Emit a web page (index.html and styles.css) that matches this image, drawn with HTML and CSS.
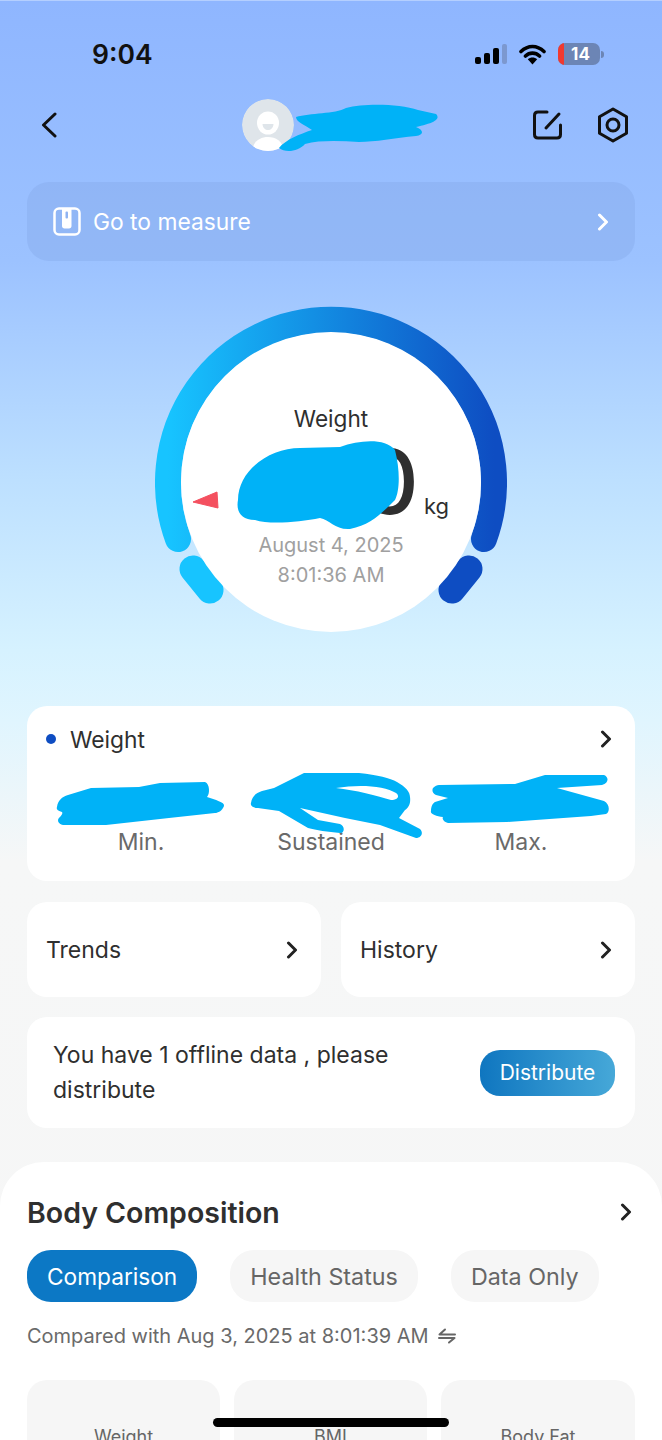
FILE: index.html
```html
<!DOCTYPE html>
<html lang="en">
<head>
    <meta charset="UTF-8">
    <meta name="viewport" content="width=device-width, initial-scale=1.0">
    <title>Weight</title>
    <link rel="stylesheet" href="styles.css">
</head>
<body>
<div class="page">
    <div class="status-bar">
        <span class="clock">9:04</span>
        <div class="status-icons">
            <svg width="32" height="20" viewBox="0 0 32 20">
                <rect x="0" y="13" width="6" height="7" rx="2" fill="#000"/>
                <rect x="9" y="9" width="6" height="11" rx="2" fill="#000"/>
                <rect x="18" y="4" width="6" height="16" rx="2" fill="#000"/>
                <rect x="27" y="0" width="5" height="20" rx="2" fill="#7c98cf"/>
            </svg>
            <svg width="27" height="21" viewBox="0 0 27 21">
                <path d="M2 7.500C9 .8 18 .8 25 7.500M6.500 12C10.500 8.200 16.500 8.200 20.500 12" fill="none" stroke="#000" stroke-width="3.600" stroke-linecap="round"/>
                <path d="M8.800 15.300C11.500 13 15.500 13 18.200 15.300L13.500 20.500Z" fill="#000"/>
            </svg>
            <div class="battery"><span class="battery-low"></span><span class="battery-num">14</span></div>
            <span class="battery-tip"></span>
        </div>
    </div>

    <div class="top-nav">
        <svg class="back" width="16" height="26" viewBox="0 0 16 26"><path d="M14 2L2.500 13L14 24" fill="none" stroke="#111" stroke-width="3" stroke-linecap="round" stroke-linejoin="round"/></svg>
        <div class="avatar">
            <svg width="52" height="52" viewBox="0 0 52 52">
                <circle cx="26" cy="26" r="26" fill="#dfe5ea"/>
                <ellipse cx="26" cy="24" rx="11" ry="11.500" fill="#fff"/>
                <path d="M20.500 25H31.500C31 33 21 33 20.500 25Z" fill="#dfe5ea"/>
                <path d="M11 52C10 43 18 38 26 38C34 38 42 43 41 52Z" fill="#fff"/>
            </svg>
        </div>
        <div class="nav-icons">
            <svg width="31" height="32" viewBox="0 0 31 32">
                <path d="M15 3H6C3.800 3 2.500 4.300 2.500 6.500V25.500C2.500 27.700 3.800 29 6 29H25C27.200 29 28.500 27.700 28.500 25.500V16" fill="none" stroke="#111" stroke-width="3" stroke-linecap="round"/>
                <path d="M27 5L14 19" fill="none" stroke="#111" stroke-width="3" stroke-linecap="round"/>
            </svg>
            <svg width="32" height="36" viewBox="0 0 32 36">
                <path d="M16 2L29.500 9.800V26.200L16 34L2.500 26.200V9.800Z" fill="none" stroke="#111" stroke-width="3" stroke-linejoin="round"/>
                <circle cx="16" cy="18" r="6" fill="none" stroke="#111" stroke-width="3"/>
            </svg>
        </div>
    </div>

    <div class="measure-bar">
        <svg width="28" height="29" viewBox="0 0 28 29">
            <rect x="1.500" y="1.500" width="25" height="26" rx="4.500" fill="none" stroke="#fff" stroke-width="2.500"/>
            <path d="M9 2H18.500V19C18.500 20.500 17.500 21.500 16 21.500H11.500C10 21.500 9 20.500 9 19Z" fill="#fff"/>
            <rect x="12.500" y="4.500" width="2.500" height="7" rx="1" fill="#8fb3f2"/>
        </svg>
        <span class="measure-text">Go to measure</span>
        <svg class="chev-right" width="12" height="18" viewBox="0 0 12 18"><path d="M2.500 2L9.500 9L2.500 16" fill="none" stroke="#fff" stroke-width="3" stroke-linecap="round" stroke-linejoin="round"/></svg>
    </div>

    <div class="gauge">
        <svg class="gauge-art" width="352" height="326" viewBox="0 0 352 326">
            <defs>
                <linearGradient id="arc" x1="0" y1="0" x2="1" y2="0">
                    <stop offset="0" stop-color="#17c4ff"/>
                    <stop offset="1" stop-color="#0e4dc2"/>
                </linearGradient>
            </defs>
            <path d="M23 233A163 163 0 1 1 329 233" fill="none" stroke="url(#arc)" stroke-width="26" stroke-linecap="round"/>
            <path d="M38 263L55 284" fill="none" stroke="#17c4ff" stroke-width="27" stroke-linecap="round"/>
            <path d="M314 263L297 284" fill="none" stroke="#0e4dc2" stroke-width="27" stroke-linecap="round"/>
            <circle cx="176" cy="176" r="150" fill="#fff"/>
            <path d="M38 196L62 186L63 202Z" fill="#f4505f" stroke="#f4505f" stroke-linejoin="round"/>
        </svg>
        <div class="gauge-text">
            <div class="gauge-title">Weight</div>
            <div class="gauge-value"><span class="big-num">0</span><span class="unit">kg</span></div>
            <div class="gauge-date">August 4, 2025</div>
            <div class="gauge-date">8:01:36 AM</div>
        </div>
    </div>

    <div class="card weight-card">
        <div class="card-head">
            <span class="dot"></span>
            <span class="card-title">Weight</span>
            <svg class="chev-right" width="12" height="18" viewBox="0 0 12 18"><path d="M2.500 2L9.500 9L2.500 16" fill="none" stroke="#222" stroke-width="3" stroke-linecap="round" stroke-linejoin="round"/></svg>
        </div>
        <div class="stats">
            <div>Min.</div>
            <div>Sustained</div>
            <div>Max.</div>
        </div>
    </div>

    <div class="link-row">
        <div class="card link-card">
            <span>Trends</span>
            <svg width="12" height="18" viewBox="0 0 12 18"><path d="M2.500 2L9.500 9L2.500 16" fill="none" stroke="#222" stroke-width="3" stroke-linecap="round" stroke-linejoin="round"/></svg>
        </div>
        <div class="card link-card">
            <span>History</span>
            <svg width="12" height="18" viewBox="0 0 12 18"><path d="M2.500 2L9.500 9L2.500 16" fill="none" stroke="#222" stroke-width="3" stroke-linecap="round" stroke-linejoin="round"/></svg>
        </div>
    </div>

    <div class="card offline-card">
        <p class="offline-text">You have 1 offline data , please distribute</p>
        <div class="distribute">Distribute</div>
    </div>

    <div class="sheet">
        <div class="sheet-head">
            <h2 class="sheet-title">Body Composition</h2>
            <svg width="12" height="18" viewBox="0 0 12 18"><path d="M2.500 2L9.500 9L2.500 16" fill="none" stroke="#222" stroke-width="3" stroke-linecap="round" stroke-linejoin="round"/></svg>
        </div>
        <div class="chips">
            <div class="chip chip-active">Comparison</div>
            <div class="chip">Health Status</div>
            <div class="chip">Data Only</div>
        </div>
        <div class="compared">
            <span>Compared with Aug 3, 2025 at 8:01:39 AM</span>
            <svg width="18" height="16" viewBox="0 0 18 16"><path d="M17 6.500H1.500L7 1.500M1 10H16.500L11 14.500" fill="none" stroke="#666" stroke-width="2" stroke-linecap="round" stroke-linejoin="round"/></svg>
        </div>
        <div class="metric-grid">
            <div class="metric">Weight</div>
            <div class="metric">BMI</div>
            <div class="metric">Body Fat</div>
        </div>
    </div>

    <!-- marker scribbles over the personal values -->
    <svg class="scribbles" width="662" height="1440" viewBox="0 0 662 1440">
        <g fill="#00b2f7" fill-rule="evenodd">
            <path d="M279 148C285 140 300 134 312 130C305 125 296 122 296 117C310 113 335 114 346 108C365 103 400 104 418 110L436 114C442 120 430 124 416 127C424 130 424 135 416 136C395 138 375 142 359 142C340 141 320 140 305 144C298 152 285 153 279 148Z"/>
            <path d="M238 500C238 470 270 448 300 448L340 447C360 440 385 438 395 450C400 470 400 490 395 500C380 515 370 525 350 529C335 530 330 520 320 518C300 522 270 525 255 520C240 520 236 510 238 500Z"/>
            <path d="M57 807C58 800 62 797 68 795L91 788L139 787L160 783L205 782C210 784 210 794 207 797C215 800 225 802 224 806C222 811 218 813 215 813L169 818L106 825L63 825C58 824 57 820 59 818C62 815 63 813 62 812C58 811 56 809 57 807Z"/>
            <path d="M251 803C252 796 256 793 262 791L274 788L304 773L359 773C378 775 390 778 397 782C406 787 410 792 410 797C411 804 408 808 405 810L399 818L420 829C424 833 421 838 416 838L380 825L345 818L300 808L318 820L340 824C345 826 345 833 340 833C328 832 316 830 308 828L279 811L258 808C253 808 250 806 251 803ZM336 788C355 790 378 796 391 800C398 800 400 796 396 793C385 786 360 784 336 788Z"/>
            <path d="M433 788C435 786 437 785 439 785L515 784L545 775L604 775C609 777 609 783 602 785L557 788L604 801C610 804 610 812 606 814L591 816L507 822L448 823C443 822 442 818 443 817C436 816 430 814 431 811C431 806 433 803 435 802L448 798L436 795C432 793 432 790 433 788Z"/>
        </g>
    </svg>
    <div class="home-bar"></div>
</div>
</body>
</html>
```

FILE: styles.css
```css
* {
    box-sizing: border-box;
}
body {
    margin: 0;
    font-family: Inter, "Noto Sans", sans-serif;
    color: #2f2f2f;
}
.page {
    position: relative;
    width: 662px;
    height: 1440px;
    overflow: hidden;
    border-top: 1px solid #b4cfff;
    background: linear-gradient(180deg, #8fb6ff 0, #9cc2ff 260px, #bde0ff 480px, #d6f2ff 650px, #e0f5fe 720px, #f6f7f7 860px, #f6f6f6 100%);
}

/* status bar */
.status-bar {
    display: flex;
    justify-content: space-between;
    align-items: center;
    height: 36px;
    margin-top: 35px;
    padding: 0 58px 0 92px;
}
.clock {
    font-size: 26.500px;
    font-weight: 600;
    color: #111;
}
.status-icons {
    display: flex;
    align-items: center;
    gap: 12px;
}
.battery {
    position: relative;
    display: flex;
    justify-content: center;
    align-items: center;
    width: 42px;
    height: 22px;
    overflow: hidden;
    border-radius: 7px;
    background: #6c85b5;
}
.battery-low {
    position: absolute;
    left: 0;
    top: 0;
    bottom: 0;
    width: 6px;
    background: #f0392f;
}
.battery-num {
    margin-left: 3px;
    color: #fff;
    font-size: 17px;
    font-weight: 700;
}
.battery-tip {
    width: 3px;
    height: 7px;
    margin-left: -11px;
    border-radius: 0 3px 3px 0;
    background: #6c85b5;
}

/* nav */
.top-nav {
    display: flex;
    align-items: center;
    height: 54px;
    margin-top: 26px;
    padding: 0 33px 0 41px;
}
.back {
    flex: none;
}
.avatar {
    width: 52px;
    height: 52px;
    margin-left: 185px;
    border-radius: 50%;
    overflow: hidden;
}
.nav-icons {
    display: flex;
    align-items: center;
    gap: 34px;
    margin-left: auto;
}

/* measure bar */
.measure-bar {
    display: flex;
    align-items: center;
    gap: 12px;
    height: 79px;
    margin: 30px 27px 0;
    padding: 0 26px;
    border-radius: 22px;
    background: rgba(130, 165, 230, 0.36);
}
.measure-text {
    color: #fff;
    font-size: 22.800px;
}
.chev-right {
    margin-left: auto;
}

/* gauge */
.gauge {
    position: relative;
    width: 352px;
    height: 326px;
    margin: 45px auto 0;
}
.gauge-art {
    position: absolute;
    left: 0;
    top: 0;
}
.gauge-text {
    position: relative;
    display: flex;
    flex-direction: column;
    align-items: center;
    padding-top: 99px;
}
.gauge-title {
    font-size: 22.600px;
    line-height: 28px;
}
.gauge-value {
    display: flex;
    align-items: baseline;
    justify-content: flex-end;
    width: 100%;
    height: 97px;
    padding-right: 58px;
}
.big-num {
    font-size: 90px;
    font-weight: 500;
    line-height: 98px;
}
.unit {
    margin-left: 5px;
    font-size: 22px;
}
.gauge-date {
    color: #a0a0a0;
    font-size: 20px;
    line-height: 30px;
}

/* cards */
.card {
    border-radius: 20px;
    background: #fff;
}
.weight-card {
    height: 175px;
    margin: 74px 27px 0;
    padding: 19px 23px 0 19px;
}
.card-head {
    display: flex;
    align-items: center;
    height: 28px;
}
.dot {
    width: 10px;
    height: 10px;
    margin-right: 14px;
    border-radius: 50%;
    background: #0e4dc2;
}
.card-title {
    font-size: 22.800px;
}
.stats {
    display: grid;
    grid-template-columns: repeat(3, 190px);
    margin-top: 74px;
    color: #6a6a6a;
    font-size: 23px;
    line-height: 30px;
    text-align: center;
}
.link-row {
    display: grid;
    grid-template-columns: 294px 294px;
    gap: 20px;
    margin: 21px 27px 0;
}
.link-card {
    display: flex;
    justify-content: space-between;
    align-items: center;
    height: 95px;
    padding: 0 23px 0 19px;
    font-size: 23px;
}
.offline-card {
    display: flex;
    align-items: center;
    justify-content: space-between;
    height: 111px;
    margin: 20px 27px 0;
    padding: 0 20px 0 26px;
}
.offline-text {
    width: 350px;
    margin: 0;
    font-size: 23px;
    line-height: 35px;
}
.distribute {
    display: flex;
    justify-content: center;
    align-items: center;
    width: 135px;
    height: 46px;
    border-radius: 20px;
    background: linear-gradient(90deg, #0f76c0, #46a8d8);
    color: #fff;
    font-size: 21px;
}

/* body composition sheet */
.sheet {
    height: 300px;
    margin-top: 34px;
    padding: 30px 27px 0;
    border-radius: 44px 44px 0 0;
    background: #fff;
}
.sheet-head {
    display: flex;
    justify-content: space-between;
    align-items: center;
    height: 40px;
    padding-right: 3px;
}
.sheet-title {
    margin: 0;
    font-size: 28.500px;
    font-weight: 600;
}
.chips {
    display: flex;
    gap: 33px;
    margin-top: 18px;
}
.chip {
    display: flex;
    align-items: center;
    height: 52px;
    padding: 0 20px;
    border-radius: 24px;
    background: #f6f6f6;
    color: #666;
    font-size: 23.300px;
}
.chip-active {
    background: #0c78c5;
    color: #fff;
    font-size: 22.700px;
}
.compared {
    display: flex;
    align-items: center;
    gap: 9px;
    margin-top: 20px;
    color: #6a6a6a;
    font-size: 20px;
    line-height: 28px;
}
.metric-grid {
    display: grid;
    grid-template-columns: 193px 193px 194px;
    gap: 14px;
    margin-top: 30px;
}
.metric {
    height: 120px;
    padding-top: 46px;
    border-radius: 20px;
    background: #f6f6f6;
    color: #666;
    font-size: 18px;
    text-align: center;
}

/* overlays */
.scribbles {
    position: absolute;
    left: 0;
    top: -1px;
}
.home-bar {
    position: absolute;
    left: 213px;
    top: 1417px;
    width: 236px;
    height: 9px;
    border-radius: 5px;
    background: #000;
}
```
